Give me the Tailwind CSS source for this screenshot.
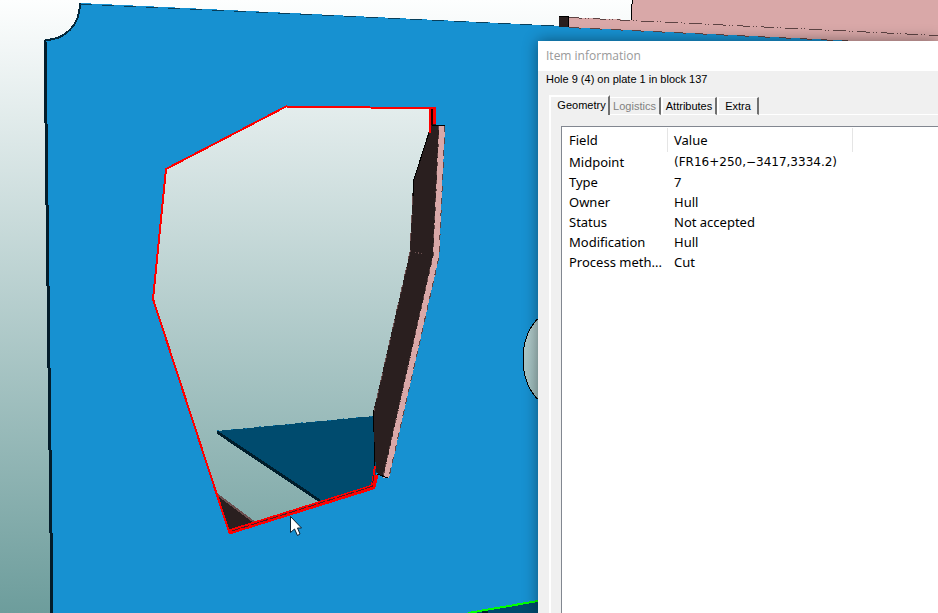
<!DOCTYPE html>
<html lang="en">
<head>
    <meta charset="UTF-8">
    <meta name="viewport" content="width=device-width, initial-scale=1.0">
    <title>Item information</title>
    <script src="https://cdn.jsdelivr.net/npm/@tailwindcss/browser@4"></script>
</head>
<body class="bg-[#6f9f9e]">
    <main class="relative min-h-screen overflow-hidden">
        <!-- 3D view -->
        <svg class="absolute inset-0 w-full h-full" viewBox="0 0 938 613" preserveAspectRatio="xMinYMin slice" shape-rendering="crispEdges" role="img" aria-label="Plate with hole">
            <defs>
                <linearGradient id="sky" gradientUnits="userSpaceOnUse" x1="0" y1="0" x2="0" y2="613">
                    <stop offset="0" stop-color="#fdfefe"/>
                    <stop offset="1" stop-color="#6d9d9c"/>
                </linearGradient>
            </defs>
            <rect width="938" height="613" fill="url(#sky)"/>

            <!-- Plate -->
            <path d="M45 40C66 40 80 24 80 3L563 26L938 45V613H53Z" fill="#1791d1"/>
            <path d="M45 40C66 40 80 24 80 3" fill="none" stroke="#04283b" stroke-width="2"/>
            <path d="M80 4L563 26" stroke="#073f5c" stroke-dasharray="12 10"/>
            <path d="M45 40L52 613" stroke="#031d2b" stroke-width="3"/>

            <!-- Pink plate behind -->
            <path d="M569 17L631 20V8L633 0H938V45L858 41L569 27Z" fill="#d9a8a8"/>
            <path d="M631.500 20V8L632.500 0" fill="none" stroke="#000"/>
            <path d="M569 17.500L938 35.500" stroke="#5e4444" stroke-dasharray="13 3 1 2 1 4"/>
            <path d="M569 27.500L858 41.500" stroke="#5e4444" stroke-dasharray="12 9"/>
            <rect x="559" y="16" width="10" height="11" fill="#2a1f1f"/>
            <path d="M559 16.500H569M568.500 16V27" stroke="#000"/>

            <!-- Hole -->
            <path d="M286 106L434 108V126L376 470L373 487L230 532L153 299L166 169Z" fill="url(#sky)"/>
            <path d="M217 431L374 416L377 470L374 486L320 501Z" fill="#004b6e"/>
            <path d="M217 431L374 416" stroke="#1177aa" stroke-dasharray="2 12"/>
            <path d="M217 432L320 501" stroke="#001d2b" stroke-width="3"/>
            <path d="M218 495L254 522L229 532Z" fill="#2a1f1f"/>
            <path d="M218 495L254 522" stroke="#6b5050" stroke-width="2"/>

            <!-- Flange -->
            <path d="M431 124L440 125V216L434 256L384 478L376 472L373 413L410 252L413 182Z" fill="#2a1f1f"/>
            <path d="M439 126H445L439 257L389 478H383L433 256Z" fill="#d9a8a8"/>
            <path d="M439 126L433 256L383 477" fill="none" stroke="#5e4444" stroke-dasharray="4 5"/>
            <path d="M445 126L439 257L389 477" fill="none" stroke="#5e4444" stroke-dasharray="6 6"/>
            <path d="M430 130L413 182V196M373.500 410V432M374.500 442V468M432 125L445 126M377 474L388 478" fill="none" stroke="#000"/>
            <path d="M413 196L410 252L374 411" fill="none" stroke="#6b5050" stroke-dasharray="9 9"/>
            <path d="M415 252L422 254" stroke="#6b5050" stroke-dasharray="1 2"/>

            <!-- Selected outline -->
            <path d="M430 133V109M435 124V108.500L370 107.500L286 106.500L166 169L153 299L217 495L229.500 533" fill="none" stroke="#f00" stroke-width="2"/>
            <path d="M434 109V124" stroke="#f00" stroke-width="4"/>
            <path d="M432 109V125" stroke="#2a0000" stroke-width="2"/>
            <path d="M229 532L373 487L376 475" fill="none" stroke="#f00" stroke-width="5"/>
            <path d="M231 531L372 486L375 466" fill="none" stroke="#f00" stroke-width="2"/>
            <path d="M232 531L372 486.500L374 475" fill="none" stroke="#40202a" stroke-dasharray="8 2"/>

            <!-- Round hole -->
            <ellipse cx="552" cy="359" rx="29" ry="46" fill="url(#sky)" stroke="#000"/>

            <path d="M468 613L538 601V613Z" fill="#004b6e"/>
            <path d="M468 613L538 601" stroke="#0f0" stroke-width="2"/>
            <path d="M482 612H488" stroke="#001d2b" stroke-width="2"/>

            <!-- Mouse pointer -->
            <path d="M290.500 516.500V532.500L294.500 529L297.500 535.500L300 534L297.500 528H301.500Z" fill="#fff" stroke="#0a2030" shape-rendering="auto"/>
        </svg>

        <!-- Dialog -->
        <section class="absolute left-[538px] top-[41px] right-0 bottom-0 flex flex-col bg-[#f0f0f0] shadow-[0_0_14px_rgba(0,0,0,0.45)] text-black">
            <header class="h-[30px] shrink-0 bg-white px-2 flex items-center">
                <h1 class="font-['Open_Sans',sans-serif] text-[12px] leading-4 text-[#999]">Item information</h1>
            </header>
            <p class="px-2 font-['Liberation_Sans',sans-serif] text-[11px] leading-4">Hole 9 (4) on plate 1 in block 137</p>

            <div class="flex flex-col flex-1 pl-[11px] pt-2 font-['Liberation_Sans',sans-serif] text-[11px] leading-4">
                <div class="flex items-end" role="tablist">
                    <button class="h-5 w-[61px] pl-1 pb-[2px] border-l-2 border-t-2 border-r-2 border-l-white border-t-white border-r-[#707070]" role="tab" aria-selected="true">Geometry</button>
                    <button class="h-[18px] w-[51px] border-t border-b border-r-2 border-t-white border-b-white border-r-[#707070] text-[#808080]" role="tab" disabled>Logistics</button>
                    <button class="h-[18px] w-[56px] border-l-2 border-t border-b border-r-2 border-l-white border-t-white border-b-white border-r-[#707070]" role="tab">Attributes</button>
                    <button class="h-[18px] w-[42px] border-l-2 border-t border-b border-r-2 border-l-white border-t-white border-b-white border-r-[#707070]" role="tab">Extra</button>
                    <span class="flex-1 border-b border-white"></span>
                </div>
                <div class="flex flex-col flex-1 border-l-2 border-white pl-[10px] pt-[11px]">
                    <div class="flex-1 bg-white border-l border-t border-[#828790] pt-[1px]">
                        <table class="w-full table-fixed border-separate border-spacing-0 font-['Noto_Sans',sans-serif] text-[13px] leading-5 text-left">
                            <colgroup>
                                <col class="w-[106px]">
                                <col class="w-[185px]">
                                <col>
                            </colgroup>
                            <thead>
                                <tr class="h-6">
                                    <th class="pl-[7px] font-normal border-r border-[#e5e5e5]">Field</th>
                                    <th class="pl-[6px] font-normal border-r border-[#e5e5e5]">Value</th>
                                    <th></th>
                                </tr>
                            </thead>
                            <tbody>
                                <tr><td class="pl-[7px]">Midpoint</td><td class="pl-[6px] whitespace-nowrap font-['DejaVu_Sans',sans-serif] text-[12px] leading-5">(FR16+250,−3417,3334.2)</td></tr>
                                <tr><td class="pl-[7px]">Type</td><td class="pl-[6px]">7</td></tr>
                                <tr><td class="pl-[7px]">Owner</td><td class="pl-[6px]">Hull</td></tr>
                                <tr><td class="pl-[7px]">Status</td><td class="pl-[6px]">Not accepted</td></tr>
                                <tr><td class="pl-[7px]">Modification</td><td class="pl-[6px]">Hull</td></tr>
                                <tr><td class="pl-[7px] whitespace-nowrap">Process meth...</td><td class="pl-[6px]">Cut</td></tr>
                            </tbody>
                        </table>
                    </div>
                </div>
            </div>
        </section>
    </main>
</body>
</html>
